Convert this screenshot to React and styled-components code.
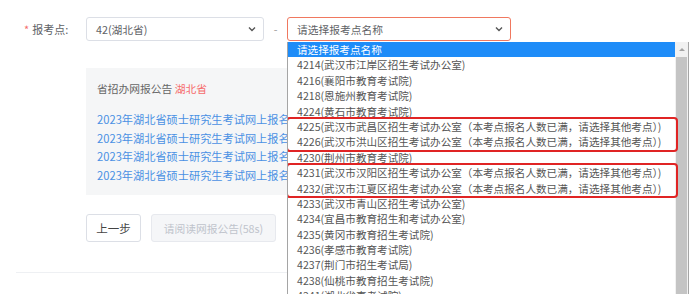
import React from 'react';
import styled, { createGlobalStyle } from 'styled-components';

const GlobalStyle = createGlobalStyle`
  html, body {
    margin: 0;
    padding: 0;
    background: #ffffff;
    overflow: hidden;
  }
  body {
    font-family: "Microsoft YaHei", "Noto Sans CJK SC", "Liberation Sans", sans-serif;
    font-size: 10.75px;
    color: #606266;
  }
`;

const Page = styled.div`
  position: relative;
  width: 697px;
  height: 294px;
  padding-top: 17px;
  box-sizing: border-box;
  overflow: hidden;
`;

const FormRow = styled.div`
  display: flex;
  align-items: center;
  height: 24px;
`;

const Label = styled.div`
  width: 86px;
  padding-left: 24px;
  box-sizing: border-box;
  display: flex;
  align-items: center;
  gap: 3px;
  font-size: 11px;
  color: #606266;
`;

const Star = styled.span`
  color: #f56c6c;
`;

const SelectBox = styled.div`
  position: relative;
  width: ${p => p.width}px;
  height: 24px;
  box-sizing: border-box;
  border: 1px solid ${p => (p.error ? '#f0785f' : '#dcdfe6')};
  border-radius: 3px;
  display: flex;
  align-items: center;
  justify-content: space-between;
  padding: 0 7px 0 9px;
  color: #606266;
  background: #fff;
`;

const Chevron = () => (
  <svg width="8" height="6" viewBox="0 0 8 6">
    <path d="M1 1.5 L4 4.5 L7 1.5" fill="none" stroke="#555" strokeWidth="1.4" />
  </svg>
);

const Dash = styled.span`
  width: 23px;
  text-align: center;
  color: #999;
`;

const Notice = styled.div`
  margin: 27px 0 0 86px;
  width: 520px;
  height: 127px;
  box-sizing: border-box;
  background: #f5f6f7;
  padding: 13px 11px 0;
`;

const NoticeTitle = styled.div`
  height: 16px;
  line-height: 16px;
  color: #666;
  margin-bottom: 13px;
`;

const Province = styled.span`
  color: #f56c6c;
`;

const NoticeLink = styled.div`
  height: 18.7px;
  line-height: 18.7px;
  font-size: 11.2px;
  color: #4a91e4;
  white-space: nowrap;
`;

const Actions = styled.div`
  display: flex;
  gap: 10px;
  margin: 19px 0 0 86px;
`;

const Button = styled.div`
  width: ${p => p.width}px;
  height: 28px;
  box-sizing: border-box;
  border: 1px solid ${p => (p.disabled ? '#e7e9ee' : '#dcdfe6')};
  border-radius: 3px;
  background: ${p => (p.disabled ? '#f5f6f8' : '#fff')};
  color: ${p => (p.disabled ? '#c0c4cc' : '#444')};
  font-size: ${p => (p.disabled ? '10.75px' : '11.5px')};
  display: flex;
  align-items: center;
  justify-content: center;
`;

const Divider = styled.div`
  margin: 30px 0 0 16px;
  width: 660px;
  height: 1px;
  background: #eef0f3;
`;

const Dropdown = styled.div`
  position: absolute;
  left: 287px;
  top: 42px;
  width: 402px;
  height: 270px;
  box-sizing: border-box;
  border: 1px solid #a5a5a5;
  border-top: none;
  background: #fff;
  display: flex;
  overflow: hidden;
`;

const OptionList = styled.div`
  flex: 1;
  display: flex;
  flex-direction: column;
`;

const Option = styled.div`
  flex-shrink: 0;
  height: 15.4px;
  line-height: 15.4px;
  font-size: 10.6px;
  padding-left: 9px;
  white-space: nowrap;
  color: ${p => (p.selected ? '#fff' : '#555')};
  background: ${p => (p.selected ? '#1e8cf8' : 'transparent')};
`;

const Marked = styled.div`
  position: relative;
  flex-shrink: 0;
  outline: 2px solid #e02424;
  outline-offset: 0px;
  border-radius: 2px;
  margin-right: -1px;
  z-index: 1;
`;

const Scrollbar = styled.div`
  width: 13px;
  display: flex;
  flex-direction: column;
  background: #f1f1f1;
`;

const ScrollArrow = styled.div`
  height: 15px;
  display: flex;
  align-items: center;
  justify-content: center;
  &::before {
    content: '';
    border-left: 3px solid transparent;
    border-right: 3px solid transparent;
    border-bottom: 3px solid #a3a3a3;
  }
`;

const ScrollThumb = styled.div`
  flex: 1;
  margin: 0 1px;
  background: #c4c4c4;
`;

const links = Array(4).fill('2023年湖北省硕士研究生考试网上报名须知公告');

const options = [
  '4214(武汉市江岸区招生考试办公室)',
  '4216(襄阳市教育考试院)',
  '4218(恩施州教育考试院)',
  '4224(黄石市教育考试院)',
  ['4225(武汉市武昌区招生考试办公室（本考点报名人数已满，请选择其他考点）)',
   '4226(武汉市洪山区招生考试办公室（本考点报名人数已满，请选择其他考点）)'],
  '4230(荆州市教育考试院)',
  ['4231(武汉市汉阳区招生考试办公室（本考点报名人数已满，请选择其他考点）)',
   '4232(武汉市江夏区招生考试办公室（本考点报名人数已满，请选择其他考点）)'],
  '4233(武汉市青山区招生考试办公室)',
  '4234(宜昌市教育招生和考试办公室)',
  '4235(黄冈市教育招生考试院)',
  '4236(孝感市教育考试院)',
  '4237(荆门市招生考试局)',
  '4238(仙桃市教育招生考试院)',
  '4241(湖北省直考试院)',
];

export default function App() {
  return (
    <Page>
      <GlobalStyle />
      <FormRow>
        <Label><Star>*</Star>报考点:</Label>
        <SelectBox width={178}>
          <span>42(湖北省)</span>
          <Chevron />
        </SelectBox>
        <Dash>-</Dash>
        <SelectBox width={224} error>
          <span>请选择报考点名称</span>
          <Chevron />
        </SelectBox>
      </FormRow>

      <Notice>
        <NoticeTitle>省招办网报公告 <Province>湖北省</Province></NoticeTitle>
        {links.map((t, i) => <NoticeLink key={i}>{t}</NoticeLink>)}
      </Notice>

      <Actions>
        <Button width={55}>上一步</Button>
        <Button width={125} disabled>请阅读网报公告(58s)</Button>
      </Actions>

      <Divider />

      <Dropdown>
        <OptionList>
          <Option selected>请选择报考点名称</Option>
          {options.map((o, i) =>
            Array.isArray(o) ? (
              <Marked key={i}>
                {o.map(s => <Option key={s}>{s}</Option>)}
              </Marked>
            ) : (
              <Option key={i}>{o}</Option>
            )
          )}
        </OptionList>
        <Scrollbar>
          <ScrollArrow />
          <ScrollThumb />
        </Scrollbar>
      </Dropdown>
    </Page>
  );
}
